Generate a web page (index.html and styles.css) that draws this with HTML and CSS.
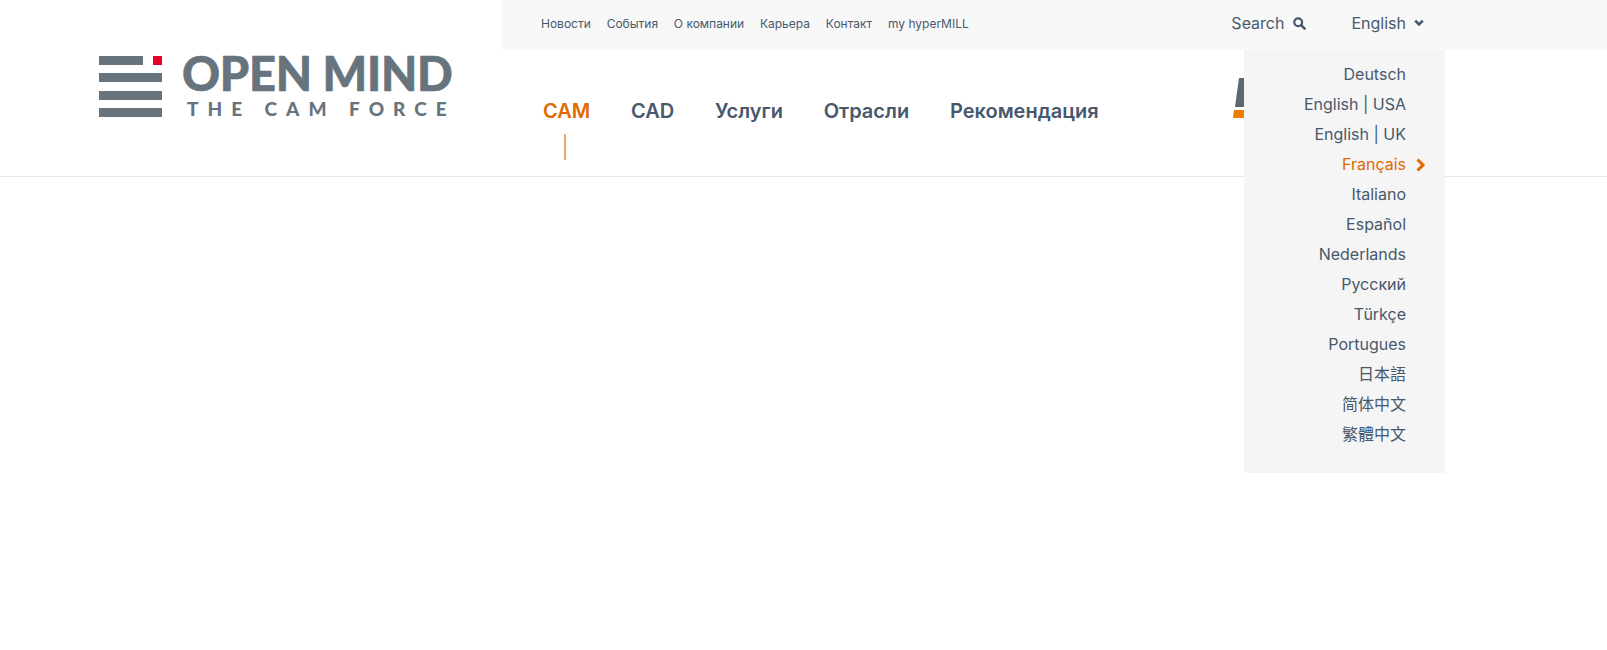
FILE: index.html
```html
<!DOCTYPE html>
<html lang="en">
<head>
    <meta charset="UTF-8">
    <meta name="viewport" content="width=device-width, initial-scale=1.0">
    <title>OPEN MIND</title>
    <link rel="stylesheet" href="styles.css">
</head>
<body>
    <div class="page">
        <div class="site-header">
            <a class="logo" href="#">
                <span class="logo-mark">
                    <span class="logo-row"><span class="logo-bar logo-bar-short"></span><span class="logo-dot"></span></span>
                    <span class="logo-bar"></span>
                    <span class="logo-bar"></span>
                    <span class="logo-bar"></span>
                </span>
                <span class="logo-text">
                    <span class="logo-name">OPEN MIND</span>
                    <span class="logo-claim">THE CAM FORCE</span>
                </span>
            </a>

            <div class="header-right">
                <div class="topbar">
                    <nav class="top-links">
                        <a href="#">Новости</a>
                        <a href="#">События</a>
                        <a href="#">О компании</a>
                        <a href="#">Карьера</a>
                        <a href="#">Контакт</a>
                        <a href="#">my hyperMILL</a>
                    </nav>
                    <a class="search" href="#">Search
                        <svg width="13" height="13" viewBox="0 0 13 13"><circle cx="5.2" cy="5.2" r="3.9" fill="none" stroke="#47586c" stroke-width="2.2"/><path d="M8.2 8.2l3.4 3.4" stroke="#47586c" stroke-width="2.6" stroke-linecap="round"/></svg>
                    </a>
                    <a class="lang-toggle" href="#">English
                        <svg width="10" height="8" viewBox="0 0 10 8"><path d="M1.2 1.6L5 5.4l3.8-3.8" fill="none" stroke="#47586c" stroke-width="2.6"/></svg>
                    </a>
                </div>

                <div class="mainbar">
                    <nav class="main-nav">
                        <a class="active" href="#">CAM</a>
                        <a href="#">CAD</a>
                        <a href="#">Услуги</a>
                        <a href="#">Отрасли</a>
                        <a href="#">Рекомендация</a>
                    </nav>
                    <svg class="promo-mark" width="14" height="41" viewBox="0 0 14 41">
                        <path d="M6 0h8l-3 29H2z" fill="#5b6870"/>
                        <path d="M1 32h13v8H0z" fill="#ee7f00"/>
                    </svg>
                </div>
            </div>
        </div>

        <ul class="lang-menu">
            <li><a href="#">Deutsch</a></li>
            <li><a href="#">English | USA</a></li>
            <li><a href="#">English | UK</a></li>
            <li class="current"><a href="#">Français</a>
                <svg width="10" height="14" viewBox="0 0 10 14"><path d="M1.500 1.500L7 7l-5.500 5.500" fill="none" stroke="#e06a00" stroke-width="3"/></svg>
            </li>
            <li><a href="#">Italiano</a></li>
            <li><a href="#">Español</a></li>
            <li><a href="#">Nederlands</a></li>
            <li><a href="#">Русский</a></li>
            <li><a href="#">Türkçe</a></li>
            <li><a href="#">Portugues</a></li>
            <li><a href="#">日本語</a></li>
            <li><a href="#">简体中文</a></li>
            <li><a href="#">繁體中文</a></li>
        </ul>
    </div>
</body>
</html>
```

FILE: styles.css
```css
body { margin: 0; background: #fff; color: #47586c; font-family: Inter, "Noto Sans CJK SC", sans-serif; }
a { color: inherit; text-decoration: none; }

.page { position: relative; min-height: 650px; }
.site-header { display: flex; height: 176px; border-bottom: 1px solid #e0e7f0; }

/* logo */
.logo { width: 502px; flex: none; box-sizing: border-box; padding: 56px 0 0 99px; display: flex; gap: 20px; align-items: flex-start; color: #68747d; }
.logo-mark { width: 63px; display: flex; flex-direction: column; gap: 8.4px; }
.logo-row { display: flex; justify-content: space-between; }
.logo-bar { display: block; height: 9px; background: #68747d; flex: none; }
.logo-bar-short { width: 44px; }
.logo-dot { width: 9px; height: 9px; background: #e4002b; }
.logo-text { display: flex; flex-direction: column; font-family: Lato, sans-serif; font-weight: 900; }
.logo-name { font-size: 47px; line-height: 35px; letter-spacing: -0.3px; white-space: nowrap; -webkit-text-stroke: 0.6px #68747d; }
.logo-claim { font-size: 19px; line-height: 20px; margin: 8px 0 0 5px; letter-spacing: 9px; white-space: nowrap; }

/* top bar */
.header-right { flex: 1; }
.topbar { height: 46px; padding: 0 183px 4px 39px; background: #f8f8f8; display: flex; align-items: center; font-size: 16px; }
.top-links { display: flex; gap: 15.8px; font-size: 12px; margin-right: auto; }
.search { display: flex; align-items: center; gap: 9px; }
.lang-toggle { display: flex; align-items: center; gap: 8px; margin-left: 45px; }

/* main nav */
.mainbar { display: flex; padding: 49px 0 0 41px; }
.main-nav { display: flex; gap: 40.8px; font-size: 20px; font-weight: 600; line-height: 24px; }
.main-nav .active { position: relative; color: #e06a00; }
.main-nav .active::after { content: ""; position: absolute; left: 21px; top: 35px; width: 2px; height: 26px; background: #eba76c; }
.promo-mark { margin: -21px 0 0 134px; }

/* language dropdown */
.lang-menu { position: absolute; top: 50px; left: 1244px; width: 201px; height: 423px; box-sizing: border-box; margin: 0; padding: 9px 39px 0 0; list-style: none; background: #f5f5f5; text-align: right; font-size: 16px; line-height: 30px; }
.lang-menu li { position: relative; }
.lang-menu .current { color: #e06a00; }
.lang-menu .current svg { position: absolute; right: -20px; top: 9px; }
```
